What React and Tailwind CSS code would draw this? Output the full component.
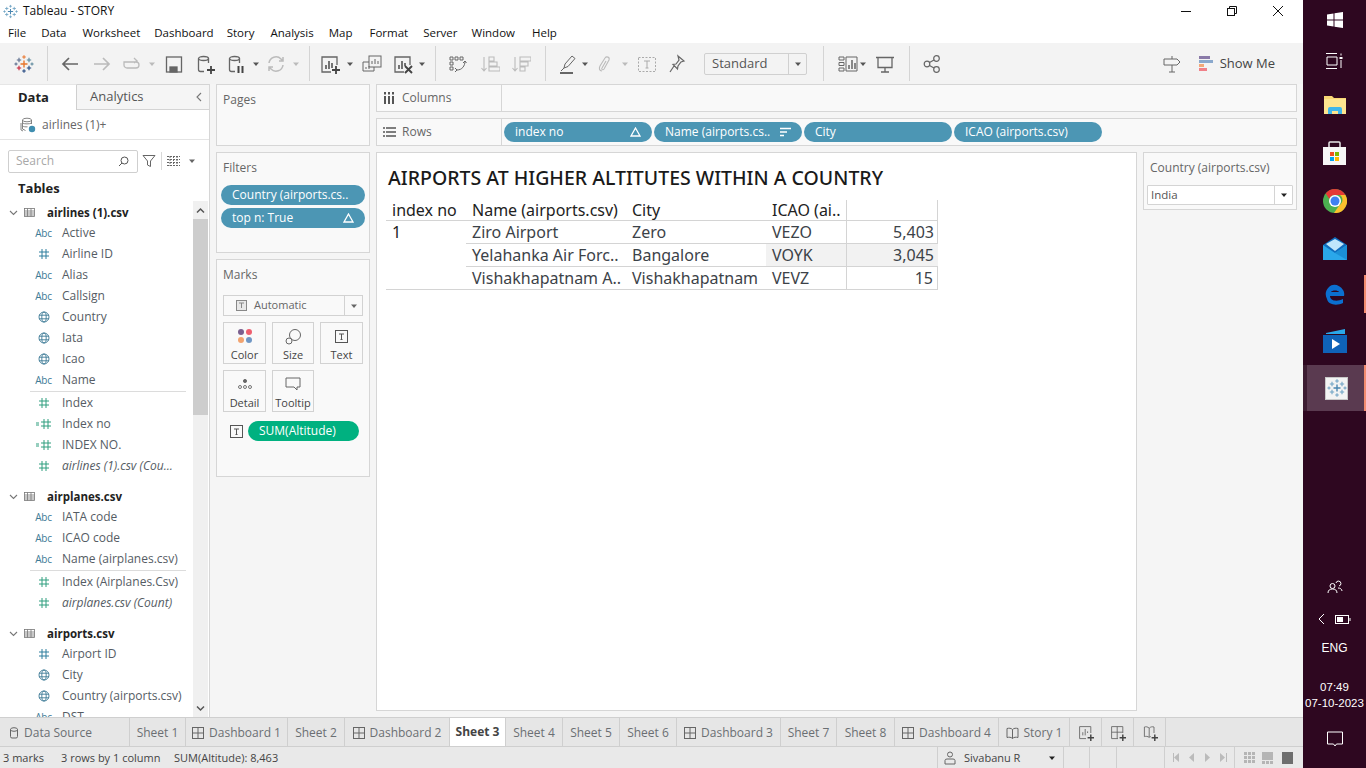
import React from 'react';

const S = ({ children, w = 20, h = 20, vb = '0 0 20 20', stroke = '#666', sw = 1.3, cls = '' }) => (
  <svg width={w} height={h} viewBox={vb} fill="none" stroke={stroke} strokeWidth={sw} className={`shrink-0 ${cls}`}>{children}</svg>
);
const Caret = ({ c = '#777' }) => (
  <svg width="8" height="8" viewBox="0 0 8 8" className="shrink-0"><path d="M1 2.500h6L4 6z" fill={c} /></svg>
);
const Sep = () => <div className="w-px h-[35px] bg-[#d4d4d4] shrink-0" />;

const TableauLogo = ({ size = 20, mono }) => {
  const c = mono
    ? ['#6fa3c4', '#6fa3c4', '#6fa3c4', '#6fa3c4', '#6fa3c4']
    : ['#e8762d', '#5a6b8c', '#c72035', '#1f447e', '#59879b'];
  const P = ({ x, y, r, col }) => <path d={`M${x - r} ${y}h${2 * r}M${x} ${y - r}v${2 * r}`} stroke={col} strokeWidth={r > 2.5 ? 1.4 : 1.1} />;
  return (
    <svg width={size} height={size} viewBox="0 0 20 20" fill="none" className="shrink-0">
      <P x={10} y={10} r={3.5} col={mono ? '#4a86b0' : '#e8762d'} />
      <P x={5} y={6} r={2.2} col={c[1]} /><P x={15} y={6} r={2.2} col={c[4]} />
      <P x={5} y={14} r={2.2} col={c[2]} /><P x={15} y={14} r={2.2} col={c[3]} />
      <P x={10} y={3} r={1.8} col={c[0]} /><P x={10} y={17} r={1.8} col={c[3]} />
      <P x={2} y={10} r={1.6} col={c[1]} /><P x={18} y={10} r={1.6} col={c[4]} />
    </svg>
  );
};

const Abc = () => <span className="text-[10px] leading-none text-[#3d7a96] tracking-[-0.3px]">Abc</span>;
const Hash = ({ c = '#2f7f9e' }) => (
  <S w={12} h={12} vb="0 0 12 12" stroke={c} sw={1}><path d="M1 4h10M1 8h10M4 1v10M8 1v10" /></S>
);
const CalcHash = () => (
  <div className="flex items-center">
    <svg width="4" height="12" viewBox="0 0 4 12" stroke="#2f9e7f" strokeWidth="1"><path d="M0 5h3M0 7h3" /></svg>
    <Hash c="#2f9e7f" />
  </div>
);
const Globe = () => (
  <S w={12} h={12} vb="0 0 12 12" stroke="#3d7a96" sw={0.9}>
    <circle cx="6" cy="6" r="5" /><ellipse cx="6" cy="6" rx="2.2" ry="5" /><path d="M1 4.2h10M1 7.8h10" />
  </S>
);
const Field = ({ icon, label, italic }) => {
  const map = { a: <Abc />, h: <Hash />, m: <Hash c="#2f9e7f" />, c: <CalcHash />, g: <Globe /> };
  return (
    <div className="h-[21px] flex items-center pl-[33px] shrink-0">
      <div className="w-[21px] flex justify-center items-center shrink-0 mr-[8px]">{map[icon]}</div>
      <span className={`text-[12px] whitespace-nowrap text-[#555c64] ${italic ? 'italic' : ''}`}>{label}</span>
    </div>
  );
};
const TableHead = ({ label }) => (
  <div className="h-[21px] flex items-center pl-[9px] shrink-0 pt-[2px]">
    <svg width="9" height="9" viewBox="0 0 9 9" fill="none" stroke="#777" strokeWidth="1.1"><path d="M1 3l3.500 3.500L8 3" /></svg>
    <svg width="11" height="11" viewBox="0 0 11 11" fill="none" stroke="#777" strokeWidth="0.8" className="ml-[6px]"><rect x="0.500" y="1.500" width="10" height="8" /><path d="M0.500 4h10M0.500 6h10M0.500 8h10M3.500 1.500v8M7 1.500v8" /></svg>
    <span className="ml-[12px] text-[11.500px] font-bold text-[#222] whitespace-nowrap">{label}</span>
  </div>
);
const Divider = () => <div className="h-px bg-[#dcdcdc] ml-[30px] mr-[7px] mt-[1px] shrink-0" />;

const Pill = ({ label, w, right, green }) => (
  <div className={`h-5 rounded-[10px] flex items-center pl-[11px] pr-[11px] shrink-0 justify-between text-[12px] text-white whitespace-nowrap overflow-hidden ${green ? 'bg-[#00b180]' : 'bg-[#4c96b4]'} ${w}`}>
    <span>{label}</span>{right}
  </div>
);
const Delta = () => (
  <svg width="11" height="10" viewBox="0 0 11 10" fill="none" stroke="#fff" strokeWidth="1.3"><path d="M5.500 1L10 9H1z" /></svg>
);
const SortIc = () => (
  <svg width="11" height="10" viewBox="0 0 11 10" stroke="#fff" strokeWidth="1.600"><path d="M0 1.500h11M0 5h7M0 8.500h4" /></svg>
);
const Panel = ({ cls, children }) => <div className={`border border-[#d6d6d6] bg-[#f9f9f9] ${cls}`}>{children}</div>;

const MarkBtn = ({ icon, label }) => (
  <div className="h-[42px] border border-[#d2d2d2] flex flex-col items-center justify-start pt-[3px] bg-[#f9f9f9]">
    <div className="h-[20px] flex items-center justify-center">{icon}</div>
    <span className="text-[11px] leading-[15px] text-[#444] mt-[1px] whitespace-nowrap">{label}</span>
  </div>
);
const TIcon = ({ s = 13 }) => (
  <svg width={s} height={s} viewBox="0 0 13 13" fill="none" stroke="#555"><rect x="0.500" y="0.500" width="12" height="12" /><path d="M4 4h5M6.500 4v5.500M5.500 9.500h2" /></svg>
);

const Tab = ({ w, label, icon, active, left }) => (
  <div className={`${w} h-full shrink-0 border-r border-[#cfcfcf] flex items-center gap-[5px] text-[12px] whitespace-nowrap ${left ? 'justify-start pl-[10px] gap-[6px]' : 'justify-center'} ${active ? 'bg-white font-bold text-[#444] pb-[1px]' : 'text-[#6b6f73] pt-[1px]'}`}>
    {icon}{label}
  </div>
);
const DashIc = () => <S w={12} h={12} vb="0 0 12 12" stroke="#666" sw={1}><rect x="0.500" y="0.500" width="11" height="11" /><path d="M6 .5v11M.5 6h11" /></S>;
const StoryIc = () => <S w={13} h={12} vb="0 0 13 12" stroke="#666" sw={1}><path d="M6.500 2.500C5 1 3 1 1 1.500v9c2-.5 4-.5 5.500 1 1.500-1.500 3.500-1.500 5.500-1v-9c-2-.5-4-.5-5.500 1zM6.500 2.500v9" /></S>;
const PlusBadge = () => <path d="M12 16h8M16 12v8" stroke="#444" strokeWidth="1.800" />;

const Th = ({ w, children }) => (
  <div className={`${w} h-[20px] shrink-0 flex items-center pl-[6px] whitespace-nowrap overflow-hidden text-[#222]`}>{children}</div>
);
const Td = ({ w, children, right, shade, border }) => (
  <div className={`${w} h-full shrink-0 flex items-center whitespace-nowrap overflow-hidden text-[#3c4248] ${right ? 'justify-end pr-[4px]' : 'pl-[6px]'} ${shade ? 'bg-[#f2f2f2]' : ''} ${border ? 'border-l border-[#d4d4d4]' : ''}`}>{children}</div>
);
const Row = ({ name, city, code, val, shade }) => (
  <div className="h-[23px] flex border-b border-[#d4d4d4]">
    <Td w="w-[160px]">{name}</Td>
    <Td w="w-[140px]">{city}</Td>
    <Td w="w-[80px]" shade={shade}>{code}</Td>
    <Td w="w-[92px]" right shade={shade} border>{val}</Td>
  </div>
);

const TaskCell = ({ h, children, cls = '' }) => <div className={`${h} w-full flex items-center justify-center shrink-0 ${cls}`}>{children}</div>;

export default function App() {
  return (
    <div className="w-[1366px] h-[768px] flex overflow-hidden bg-white font-['Open_Sans','Noto_Sans',sans-serif] text-[12px]">
      <div className="w-[1303px] h-full flex flex-col shrink-0">
        {/* title */}
        <div className="h-[22px] flex items-center bg-white shrink-0 pl-[3px] relative">
          <TableauLogo size={15} mono />
          <span className="ml-[5px] text-[12px] text-[#111]">Tableau - STORY</span>
          <div className="ml-auto flex items-center h-full pr-[19px]">
            <S w={12} h={12} vb="0 0 12 12" stroke="#111" sw={1} cls="mr-[34px]"><path d="M1 6.500h10" /></S>
            <S w={12} h={12} vb="0 0 12 12" stroke="#111" sw={1} cls="mr-[34px]"><rect x="1.500" y="3.500" width="7" height="7" /><path d="M3.500 3.500v-2h7v7h-2" /></S>
            <S w={12} h={12} vb="0 0 12 12" stroke="#111" sw={1}><path d="M1 1l10 10M11 1L1 11" /></S>
          </div>
        </div>
        {/* menu */}
        <div className="h-[21px] flex items-center bg-white shrink-0 text-[11.500px] text-[#111] pl-[8px]">
          <span>File</span><span className="ml-[15px]">Data</span><span className="ml-[16px]">Worksheet</span><span className="ml-[14px]">Dashboard</span><span className="ml-[13px]">Story</span><span className="ml-[16px]">Analysis</span><span className="ml-[15px]">Map</span><span className="ml-[17px]">Format</span><span className="ml-[15px]">Server</span><span className="ml-[14px]">Window</span><span className="ml-[17px]">Help</span>
        </div>
        {/* toolbar */}
        <div className="h-[41px] bg-[#f3f3f3] flex items-center shrink-0 pr-[28px]">
          <div className="ml-[14px]"><TableauLogo /></div>
          <div className="ml-[13px]"><Sep /></div>
          <div className="ml-[12px]"><S stroke="#666" sw={1.7}><path d="M18 10H3M9 4l-6 6 6 6" /></S></div>
          <div className="ml-[12px]"><S stroke="#bbb" sw={1.7}><path d="M2 10h15M11 4l6 6-6 6" /></S></div>
          <div className="ml-[10px]"><S stroke="#bbb"><path d="M2 8h12a3 3 0 0 1 3 3 3 3 0 0 1-3 3H5a3 3 0 0 1-3-3zM12 4l3 3-3 2" /></S></div>
          <div className="ml-[6px]"><Caret c="#bbb" /></div>
          <div className="ml-[8px]"><S><rect x="2.500" y="3" width="15" height="15" /><rect x="6" y="13" width="7" height="5" fill="#666" /></S></div>
          <div className="ml-[11px]"><S><ellipse cx="8.500" cy="4.500" rx="5" ry="2" /><path d="M3.500 4.500v11a2 2 0 0 0 2 2H9M13.500 4.500V9" /><PlusBadge /></S></div>
          <div className="ml-[11px]"><S><ellipse cx="8.500" cy="4.500" rx="5" ry="2" /><path d="M3.500 4.500v11a2 2 0 0 0 2 2H9M13.500 4.500V9" /><path d="M12.500 12v7M16.500 12v7" stroke="#444" strokeWidth="2" /></S></div>
          <div className="ml-[6px]"><Caret c="#555" /></div>
          <div className="ml-[6px]"><S stroke="#bbb" sw={1.5}><path d="M3 9a7 7 0 0 1 12-4l2 2M17 11a7 7 0 0 1-12 4l-2-2M17 3v4h-4M3 17v-4h4" /></S></div>
          <div className="ml-[6px]"><Caret c="#bbb" /></div>
          <div className="ml-[9px]"><Sep /></div>
          <div className="ml-[10px]"><S><path d="M11 18H2V3h15v8" /><path d="M6 15v-4M9 15V7M12 14v-5" strokeWidth="1.800" /><PlusBadge /></S></div>
          <div className="ml-[6px]"><Caret c="#555" /></div>
          <div className="ml-[8px]"><S sw={1}><rect x="7" y="2" width="12" height="11" fill="#f3f3f3" /><path d="M10 10V7M13 10V5M16 10V7" /><path d="M7 8H1v9h11v-4" /><path d="M4 15v-2M7 15v-3" /></S></div>
          <div className="ml-[11px]"><S><path d="M11 18H2V3h15v8" /><path d="M6 15v-4M9 15V7M12 12V9" strokeWidth="1.800" /><path d="M12 12l7 7M19 12l-7 7" stroke="#444" strokeWidth="1.900" /></S></div>
          <div className="ml-[5px]"><Caret c="#555" /></div>
          <div className="ml-[9px]"><Sep /></div>
          <div className="ml-[11px]"><S sw={1}><path d="M3 3h3v3H3zM8 3h3v3H8zM13 3h3v3h-3zM3 8h3v3H3zM3 13h3v3H3z" /><path d="M18 7c0 5-3 9-8 9M8 14l2 2-2 2M16 9l2-2 1.500 2" /></S></div>
          <div className="ml-[13px]"><S stroke="#bbb" sw={1.1}><path d="M4 3v14M1.500 14L4 17l2.500-3M9 3h5v4H9zM9 8h8v4H9zM9 13h11v4H9z" /></S></div>
          <div className="ml-[11px]"><S stroke="#bbb" sw={1.1}><path d="M4 3v14M1.500 14L4 17l2.500-3M9 3h11v4H9zM9 8h8v4H9zM9 13h5v4H9z" /></S></div>
          <div className="ml-[14px]"><Sep /></div>
          <div className="ml-[12px]"><S sw={1}><path d="M6 14l1-4 7-8 3 2.500-7 8zM3 17l3-3" /><path d="M2 19h13" strokeWidth="2" /></S></div>
          <div className="ml-[3px]"><Caret c="#555" /></div>
          <div className="ml-[6px]"><S stroke="#bbb" sw={1.1}><path d="M7 17c-3 0-3-3-2-5l5-8c1.500-2 5-1 4 2l-5 9c-1 1.500-3 .5-2-1l4-7" /></S></div>
          <div className="ml-[6px]"><Caret c="#bbb" /></div>
          <div className="ml-[8px]"><S stroke="#aaa" sw={1}><rect x="1.500" y="3.500" width="17" height="14" strokeDasharray="2 1.500" /><path d="M7 7h6M10 7v7M8.500 14h3" /></S></div>
          <div className="ml-[10px]"><S sw={1.2}><path d="M11 2l6 5-3 1-3 4-.5 3L6 10.500l3-.5 3-4zM7 12l-4 6" /></S></div>
          <div className="ml-[17px] w-[103px] h-[22px] border border-[#d0d0d0] rounded-[2px] flex items-center shrink-0">
            <span className="flex-1 pl-[7px] text-[13px] text-[#555]">Standard</span>
            <div className="w-[18px] h-full border-l border-[#d0d0d0] flex items-center justify-center"><Caret c="#555" /></div>
          </div>
          <div className="ml-[16px]"><Sep /></div>
          <div className="ml-[14px]"><S sw={1}><path d="M1 3h5v3H1zM1 8.500h5v3H1zM1 14h5v3H1zM8 3h11v14H8z" /><path d="M11 15v-4M14 15V6M17 15v-6" strokeWidth="1.500" /></S></div>
          <div className="ml-[1px]"><Caret c="#555" /></div>
          <div className="ml-[8px]"><S><path d="M1 3.500h18M3 3.500v10h14v-10M10 13.500V18M6 18h8" /></S></div>
          <div className="ml-[14px]"><Sep /></div>
          <div className="ml-[12px]"><S sw={1.2}><circle cx="5" cy="10" r="2.800" /><circle cx="14.500" cy="4.500" r="2.800" /><circle cx="14.500" cy="15.500" r="2.800" /><path d="M7.500 8.500l4.500-2.500M7.500 11.500l4.500 2.500" /></S></div>
          <div className="ml-auto"><S sw={1}><path d="M2 5h13l3 3-3 3H2zM10 2v3M10 11v7M7 18h6" /></S></div>
          <div className="ml-[17px] flex flex-col gap-[1px] w-[15px] shrink-0">
            <div className="h-[3px] w-[11px] bg-[#8a7aa8]" /><div className="h-[3px] w-[14px] bg-[#8aa8cc]" /><div className="h-[3px] w-[5px] bg-[#f2a878]" /><div className="h-[3px] w-[8px] bg-[#f08088]" />
          </div>
          <span className="ml-[6px] text-[13px] text-[#444]">Show Me</span>
        </div>
        {/* content */}
        <div className="flex-1 min-h-0 flex bg-[#f5f5f5]">
          {/* left data pane */}
          <div className="w-[210px] shrink-0 flex flex-col bg-white border-r border-[#d6d6d6] overflow-hidden">
            <div className="h-[26px] flex shrink-0 bg-[#f5f5f5]">
              <div className="w-[77px] bg-white flex items-center pl-[18px] font-bold text-[13px] text-[#222] border-t border-[#e6e6e6] border-r border-r-[#cfcfcf]">Data</div>
              <div className="flex-1 flex items-center pl-[13px] text-[13px] text-[#555] border-b border-t border-[#d4d4d4]">Analytics
                <svg width="8" height="10" viewBox="0 0 8 10" fill="none" stroke="#777" strokeWidth="1.1" className="ml-auto mr-[6px]"><path d="M6 1L2 5l4 4" /></svg>
              </div>
            </div>
            <div className="h-[30px] flex items-center pl-[20px] border-b border-[#e4e4e4] shrink-0">
              <svg width="16" height="16" viewBox="0 0 16 16" fill="none" stroke="#777" strokeWidth="0.9"><ellipse cx="7" cy="3" rx="4.500" ry="1.800" /><path d="M2.500 3v9l3 1.500M11.500 3v4M1 6v7l2 1M2.500 6c2 1.200 7 1.200 9 0M2.500 9c1 .7 3 1 5 .8" /><circle cx="12" cy="12" r="3.200" fill="#3f8eb0" stroke="none" /></svg>
              <span className="ml-[6px] text-[12px] text-[#666]">airlines (1)+</span>
            </div>
            <div className="h-[38px] flex items-center pl-[8px] shrink-0 pt-[4px]">
              <div className="w-[130px] h-[23px] border border-[#cfcfcf] rounded-[2px] flex items-center px-[7px] text-[#a8a8a8] text-[12px]">
                Search
                <svg width="13" height="13" viewBox="0 0 13 13" fill="none" stroke="#555" strokeWidth="1" className="ml-auto"><circle cx="7.500" cy="5.500" r="3.500" /><path d="M5 8l-3 3" /></svg>
              </div>
              <svg width="14" height="14" viewBox="0 0 14 14" fill="none" stroke="#666" strokeWidth="1" className="ml-[4px]"><path d="M1 1.500h12L8.500 7v5.500l-3-1.500V7z" /></svg>
              <div className="w-px h-[18px] bg-[#d8d8d8] ml-[5px]" />
              <svg width="13" height="10" viewBox="0 0 13 10" stroke="#666" strokeWidth="1" className="ml-[5px]"><path d="M0 .5h13M0 3.500h13M0 6.500h13M0 9.500h13M3 0v10M6.500 0v10M10 0v10" strokeDasharray="2 1" /></svg>
              <span className="ml-[8px]"><Caret c="#666" /></span>
            </div>
            <div className="h-[18px] flex items-center pl-[18px] font-bold text-[13px] text-[#222] shrink-0 mt-[2px] mb-[3px]">Tables</div>
            <div className="flex-1 min-h-0 flex overflow-hidden">
              <div className="flex-1 min-w-0 overflow-hidden flex flex-col">
                <TableHead label="airlines (1).csv" />
                <Field icon="a" label="Active" />
                <Field icon="h" label="Airline ID" />
                <Field icon="a" label="Alias" />
                <Field icon="a" label="Callsign" />
                <Field icon="g" label="Country" />
                <Field icon="g" label="Iata" />
                <Field icon="g" label="Icao" />
                <Field icon="a" label="Name" />
                <Divider />
                <Field icon="m" label="Index" />
                <Field icon="c" label="Index no" />
                <Field icon="c" label="INDEX NO." />
                <Field icon="m" label="airlines (1).csv (Cou..." italic />
                <div className="h-[9px] shrink-0" />
                <TableHead label="airplanes.csv" />
                <Field icon="a" label="IATA code" />
                <Field icon="a" label="ICAO code" />
                <Field icon="a" label="Name (airplanes.csv)" />
                <Divider />
                <Field icon="m" label="Index (Airplanes.Csv)" />
                <Field icon="m" label="airplanes.csv (Count)" italic />
                <div className="h-[9px] shrink-0" />
                <TableHead label="airports.csv" />
                <Field icon="h" label="Airport ID" />
                <Field icon="g" label="City" />
                <Field icon="g" label="Country (airports.csv)" />
                <Field icon="a" label="DST" />
              </div>
              <div className="w-[15px] mr-px shrink-0 bg-[#f0f0f0] flex flex-col">
                <div className="h-[18px] flex items-center justify-center shrink-0"><svg width="9" height="7" viewBox="0 0 9 7" fill="none" stroke="#555" strokeWidth="1.500"><path d="M1 5.500l3.500-3.500L8 5.500" /></svg></div>
                <div className="h-[196px] bg-[#cdcdcd] shrink-0" />
                <div className="flex-1" />
                <div className="h-[17px] flex items-center justify-center shrink-0"><svg width="9" height="7" viewBox="0 0 9 7" fill="none" stroke="#555" strokeWidth="1.500"><path d="M1 1.500L4.500 5 8 1.500" /></svg></div>
              </div>
            </div>
          </div>
          {/* pages/filters/marks */}
          <div className="w-[154px] ml-[6px] shrink-0 flex flex-col">
            <Panel cls="h-[62px] pl-[6px] pt-[6px] text-[12px] leading-[17px] text-[#666] shrink-0">Pages</Panel>
            <Panel cls="h-[101px] mt-[6px] shrink-0 px-[4px] pt-[6px]">
              <div className="pl-[2px] text-[12px] text-[#666] h-[17px] leading-[17px]">Filters</div>
              <div className="mt-[9px] flex flex-col gap-[3px]">
                <Pill label="Country (airports.cs.." w="w-[144px]" />
                <Pill label="top n: True" w="w-[144px]" right={<Delta />} />
              </div>
            </Panel>
            <Panel cls="h-[218px] mt-[6px] shrink-0 px-[6px] pt-[6px]">
              <div className="text-[12px] text-[#666] h-[17px] leading-[17px]">Marks</div>
              <div className="mt-[12px] w-[140px] h-[21px] border border-[#d2d2d2] flex items-center bg-[#f9f9f9]">
                <div className="flex-1 flex items-center pl-[12px] text-[11px] text-[#666] gap-[7px]">
                  <svg width="11" height="11" viewBox="0 0 11 11" fill="#e8e8e8" stroke="#888"><rect x="0.500" y="0.500" width="10" height="10" /><path d="M3 3h5M5.500 3v5" fill="none" /></svg>
                  Automatic
                </div>
                <div className="w-[18px] h-full border-l border-[#d2d2d2] flex items-center justify-center"><Caret c="#666" /></div>
              </div>
              <div className="mt-[6px] grid grid-cols-[43px_42px_43px] gap-x-[6px] gap-y-[6px]">
                <MarkBtn label="Color" icon={<svg width="16" height="16" viewBox="0 0 16 16"><circle cx="4" cy="4" r="3" fill="#7a5f8f" /><circle cx="12" cy="4" r="3" fill="#ee5f6f" /><circle cx="4" cy="12" r="3" fill="#f2a36f" /><circle cx="12" cy="12" r="3" fill="#6f96c4" /></svg>} />
                <MarkBtn label="Size" icon={<svg width="17" height="17" viewBox="0 0 17 17" fill="none" stroke="#666" strokeWidth="1"><circle cx="10" cy="7" r="5.500" /><circle cx="4" cy="13" r="3" fill="#f9f9f9" /></svg>} />
                <MarkBtn label="Text" icon={<TIcon />} />
                <MarkBtn label="Detail" icon={<svg width="16" height="14" viewBox="0 0 16 14" fill="none" stroke="#666" strokeWidth="0.9"><circle cx="8" cy="4" r="1.600" fill="#666" /><circle cx="3" cy="10" r="1.500" /><circle cx="8" cy="10" r="1.500" /><circle cx="13" cy="10" r="1.500" /></svg>} />
                <MarkBtn label="Tooltip" icon={<svg width="16" height="14" viewBox="0 0 16 14" fill="none" stroke="#666"><path d="M1 1h14v9h-3v3l-3-3H1z" /></svg>} />
              </div>
              <div className="mt-[9px] flex items-center pl-[7px] gap-[5px]">
                <TIcon />
                <Pill label="SUM(Altitude)" w="w-[111px]" green />
              </div>
            </Panel>
          </div>
          {/* right */}
          <div className="flex-1 min-w-0 ml-[6px] mr-[6px] flex flex-col">
            <Panel cls="h-[28px] flex items-center shrink-0">
              <div className="w-[125px] h-full border-r border-[#d6d6d6] flex items-center pl-[6px] gap-[7px] text-[12px] text-[#666] shrink-0">
                <svg width="12" height="12" viewBox="0 0 12 12" stroke="#555" strokeWidth="2"><path d="M2 4v8M6 4v8M10 4v8M2 0v2.500M6 0v2.500M10 0v2.500" /></svg>Columns
              </div>
            </Panel>
            <Panel cls="h-[28px] mt-[6px] flex items-center shrink-0">
              <div className="w-[125px] h-full border-r border-[#d6d6d6] flex items-center pl-[6px] gap-[6px] text-[12px] text-[#666] shrink-0">
                <svg width="13" height="12" viewBox="0 0 13 12" stroke="#555" strokeWidth="1.600"><path d="M0 2h2M3 2h10M0 6h2M3 6h10M0 10h2M3 10h10" /></svg>Rows
              </div>
              <div className="flex gap-[2px] ml-[2px]">
                <Pill label="index no" w="w-[148px]" right={<Delta />} />
                <Pill label="Name (airports.cs.." w="w-[148px]" right={<SortIc />} />
                <Pill label="City" w="w-[148px]" />
                <Pill label="ICAO (airports.csv)" w="w-[148px]" />
              </div>
            </Panel>
            <div className="flex-1 min-h-0 flex mt-[6px] mb-[6px] gap-[6px]">
              {/* view */}
              <div className="w-[761px] shrink-0 border border-[#d6d6d6] bg-white pl-[9px] pt-[11px] text-[16px] font-['Noto_Sans','Open_Sans',sans-serif]">
                <div className="text-[19.500px] font-medium leading-[27px] text-[#1a1a1a] pl-[2px] whitespace-nowrap">AIRPORTS AT HIGHER ALTITUTES WITHIN A COUNTRY</div>
                <div className="w-[552px] mt-[9px]">
                  <div className="flex h-[21px] border-b border-[#d4d4d4]">
                    <Th w="w-[80px]">index no</Th>
                    <Th w="w-[160px]">Name (airports.csv)</Th>
                    <Th w="w-[140px]">City</Th>
                    <Th w="w-[80px]">ICAO (ai..</Th>
                    <div className="w-[92px] border-l border-r border-[#d4d4d4] shrink-0" />
                  </div>
                  <div className="flex border-b border-r border-[#d4d4d4]">
                    <div className="w-[80px] shrink-0 pl-[6px] h-[22px] flex items-center text-[#222]">1</div>
                    <div className="flex-1 min-w-0">
                      <Row name="Ziro Airport" city="Zero" code="VEZO" val="5,403" />
                      <Row name="Yelahanka Air Forc.." city="Bangalore" code="VOYK" val="3,045" shade />
                      <div className="h-[22px] flex">
                        <Td w="w-[160px]">Vishakhapatnam A..</Td>
                        <Td w="w-[140px]">Vishakhapatnam</Td>
                        <Td w="w-[80px]">VEVZ</Td>
                        <Td w="w-[91px]" right border>15</Td>
                      </div>
                    </div>
                  </div>
                </div>
              </div>
              {/* country filter */}
              <div className="w-[154px] h-[58px] shrink-0 border border-[#d6d6d6] bg-[#f9f9f9] flex flex-col">
                <div className="h-[32px] pb-[2px] flex items-center pl-[6px] text-[12px] text-[#666] whitespace-nowrap">Country (airports.csv)</div>
                <div className="mx-[3px] h-[20px] border border-[#d4d4d4] bg-white flex items-center rounded-[1px]">
                  <span className="flex-1 pl-[3px] text-[11.500px] text-[#555]">India</span>
                  <div className="w-[18px] h-full border-l border-[#d4d4d4] flex items-center justify-center"><Caret c="#222" /></div>
                </div>
              </div>
            </div>
          </div>
        </div>
        {/* tabs */}
        <div className="h-[30px] bg-[#e6e6e6] border-t border-b border-[#cfcfcf] flex items-stretch shrink-0 relative z-10">
          <Tab w="w-[130px]" left label="Data Source" icon={<svg width="8" height="12" viewBox="0 0 8 12" fill="none" stroke="#666"><ellipse cx="4" cy="2.500" rx="3.500" ry="1.800" /><path d="M.5 2.500v7a1.500 1.500 0 0 0 1.500 1.500h4a1.500 1.500 0 0 0 1.500-1.500v-7" /></svg>} />
          <Tab w="w-[56px]" label="Sheet 1" />
          <Tab w="w-[102px]" label="Dashboard 1" icon={<DashIc />} />
          <Tab w="w-[57px]" label="Sheet 2" />
          <Tab w="w-[105px]" label="Dashboard 2" icon={<DashIc />} />
          <Tab w="w-[56px]" label="Sheet 3" active />
          <Tab w="w-[57px]" label="Sheet 4" />
          <Tab w="w-[57px]" label="Sheet 5" />
          <Tab w="w-[57px]" label="Sheet 6" />
          <Tab w="w-[104px]" label="Dashboard 3" icon={<DashIc />} />
          <Tab w="w-[56px]" label="Sheet 7" />
          <Tab w="w-[58px]" label="Sheet 8" />
          <Tab w="w-[104px]" label="Dashboard 4" icon={<DashIc />} />
          <Tab w="w-[71px]" label="Story 1" icon={<StoryIc />} />
          <Tab w="w-[32px]" icon={<S w={16} h={16} vb="0 0 20 20" sw={1.1}><path d="M10 17H2V2h14v8" /><path d="M6 13V9M9 13V5M12 10V8" /><PlusBadge /></S>} />
          <Tab w="w-[32px]" icon={<S w={16} h={16} vb="0 0 20 20" sw={1.1}><path d="M10 17H2V2h14v8M9 2v15M2 9h14" /><PlusBadge /></S>} />
          <Tab w="w-[32px]" icon={<S w={16} h={16} vb="0 0 20 20" sw={1.1}><path d="M9 4C7 2 5 2 3 2.500v12c2-.5 4-.5 6 1 1-.7 1-1 2-1M9 4c2-2 4-2 6-1.500V10M9 4v11" /><PlusBadge /></S>} />
        </div>
        {/* status */}
        <div className="h-[21px] bg-[#e9e9e9] flex items-center shrink-0 text-[11px] text-[#444] whitespace-nowrap">
          <span className="ml-[3px] w-[58px] pt-[1px]">3 marks</span>
          <span className="w-[113px] pt-[1px]">3 rows by 1 column</span>
          <span className="pt-[1px]">SUM(Altitude): 8,463</span>
          <div className="ml-auto flex h-full items-stretch">
            <div className="w-[127px] border-l border-r border-[#cfcfcf] flex items-center pl-[6px]">
              <svg width="12" height="14" viewBox="0 0 12 14" fill="none" stroke="#666"><circle cx="6" cy="3.500" r="2.500" /><path d="M1 13V9.500Q1 8 3 8h6q2 0 2 1.500V13z" /></svg>
              <span className="ml-[8px] pt-[1px]">Sivabanu R</span>
              <span className="ml-auto mr-[7px]"><Caret c="#222" /></span>
            </div>
            <div className="w-[26px] border-r border-[#cfcfcf]" />
            <div className="w-[27px] border-r border-[#cfcfcf]" />
            <div className="w-[48px] border-r border-[#cfcfcf]" />
            <div className="w-[70px] border-r border-[#cfcfcf] flex items-center justify-center gap-[9px]">
              <svg width="7" height="9" viewBox="0 0 7 9" fill="#bbb"><path d="M1 0v9h1V0zM7 0v9L2 4.500z" /></svg>
              <svg width="7" height="9" viewBox="0 0 7 9" fill="#bbb"><path d="M6 0v9L1 4.500z" /></svg>
              <svg width="7" height="9" viewBox="0 0 7 9" fill="#bbb"><path d="M1 0v9l5-4.500z" /></svg>
              <svg width="7" height="9" viewBox="0 0 7 9" fill="#bbb"><path d="M6 0v9h1V0zM0 0v9l5-4.500z" /></svg>
            </div>
            <div className="w-[68px] flex items-center justify-center gap-[7px] pr-[2px]">
              <svg width="11" height="12" viewBox="0 0 11 12" fill="#b5b5b5"><path d="M0 0h3v3H0zM4 0h3v3H4zM8 0h3v3H8zM0 4h3v3H0zM4 4h3v3H4zM8 4h3v3H8zM0 8h3v3H0zM4 8h3v3H4zM8 8h3v3H8z" /></svg>
              <svg width="11" height="12" viewBox="0 0 11 12" fill="#b5b5b5"><path d="M0 0h11v8H0zM0 9h3v3H0zM4 9h3v3H4zM8 9h3v3H8z" /></svg>
              <div className="w-[11px] h-[12px] bg-[#6e6e6e] ml-[2px]" />
            </div>
          </div>
        </div>
      </div>
      {/* taskbar */}
      <div className="w-[63px] h-full bg-[#2e0720] flex flex-col shrink-0 relative text-white">
        <TaskCell h="h-[40px]"><svg width="16" height="16" viewBox="0 0 16 16" fill="#fff"><path d="M0 2.500l6.500-1v6H0zM7.500 1.300L16 0v7.500H7.500zM0 8.500h6.500v6l-6.500-1zM7.500 8.500H16V16l-8.500-1.300z" /></svg></TaskCell>
        <TaskCell h="h-[41px]"><svg width="17" height="16" viewBox="0 0 17 16" fill="none" stroke="#fff"><path d="M0 .5h11M0 15.500h11M1 4h10v8H1zM15 .5v2M15 7v8" /><rect x="13.500" y="4" width="3" height="2" fill="#fff" stroke="none" /></svg></TaskCell>
        <TaskCell h="h-[48px]"><svg width="22" height="18" viewBox="0 0 22 18"><path d="M0 0h8l2 2h12v16H0z" fill="#f8d775" /><path d="M0 3h22v15H0z" fill="#fde48f" /><path d="M4 18v-5a2 2 0 0 1 2-2h10a2 2 0 0 1 2 2v5h-4v-3H8v3z" fill="#3fb6ea" /></svg></TaskCell>
        <TaskCell h="h-[47px]"><svg width="23" height="24" viewBox="0 0 23 24"><path d="M0 6h23v18H0z" fill="#f6f6f6" /><path d="M6 6V2a1 1 0 0 1 1-1h9a1 1 0 0 1 1 1v4" fill="none" stroke="#e8e8e8" strokeWidth="1.500" /><path d="M7 11h4v4H7z" fill="#f25022" /><path d="M12 11h4v4h-4z" fill="#7fba00" /><path d="M7 16h4v4H7z" fill="#00a4ef" /><path d="M12 16h4v4h-4z" fill="#ffb900" /></svg></TaskCell>
        <TaskCell h="h-[49px]"><svg width="24" height="24" viewBox="0 0 24 24"><circle cx="12" cy="12" r="12" fill="#4caf50" /><path d="M12 0a12 12 0 0 1 10.400 6H12a6 6 0 0 0-5.700 4L2.700 4.400A12 12 0 0 1 12 0z" fill="#e53935" /><path d="M22.400 6A12 12 0 0 1 11 24l5.500-8a6 6 0 0 0 .5-10z" fill="#fbc02d" /><circle cx="12" cy="12" r="6" fill="#fff" /><circle cx="12" cy="12" r="4.500" fill="#3f80f0" /></svg></TaskCell>
        <TaskCell h="h-[47px]"><svg width="24" height="23" viewBox="0 0 24 23"><path d="M12 0l12 8v15H0V8z" fill="#0f6cbd" /><path d="M0 8l12 8 12-8v15H0z" fill="#2aa7ea" /><path d="M3 7l9-5 9 5-9 7z" fill="#bfe6fb" /><path d="M12 16l12-8v15z" fill="#1b8fd6" /></svg></TaskCell>
        <TaskCell h="h-[44px]"><svg width="21" height="21" viewBox="0 0 21 21" fill="none"><path d="M3 15c-2-4-2-8 2-12s11-2 14 3c2 3 1 6 1 6H6c0 5 7 6 13 3v4c-6 3-15 2-16-4z" fill="#0b6fd0" /><path d="M7 8c1-2 7-2 8 0z" fill="#2e0720" /></svg></TaskCell>
        <TaskCell h="h-[49px]"><svg width="24" height="24" viewBox="0 0 24 24"><path d="M3 4L22 0v5H3z" fill="#2aa7ea" /><path d="M0 6h24v18H0z" fill="#0f62b8" /><path d="M9 10l8 5-8 5z" fill="#fff" /></svg></TaskCell>
        <TaskCell h="h-[46px]" cls="bg-[#5a3a50] border-l-[4px] border-[#3c1c31]">
          <div className="w-[23px] h-[23px] bg-[#f3f3f3] border border-[#c8c8c8] flex items-center justify-center"><TableauLogo size={20} mono /></div>
        </TaskCell>
        <div className="absolute right-0 top-[275px] w-[2px] h-[38px] bg-[#f28b6f]" />
        <div className="absolute right-0 top-[365px] w-[2px] h-[46px] bg-[#f28b6f]" />
        <div className="flex-1" />
        <TaskCell h="h-[30px]"><svg width="16" height="16" viewBox="0 0 16 16" fill="none" stroke="#fff"><circle cx="5.500" cy="8" r="2.500" /><path d="M1 15c0-3 2-4 4.500-4S10 12 10 15M9 5a2.500 2.500 0 1 1 3 3M11 10c2 0 4 1 4 3" /></svg></TaskCell>
        <div className="h-[36px] flex items-center justify-center gap-[10px] shrink-0">
          <svg width="7" height="12" viewBox="0 0 7 12" fill="none" stroke="#fff"><path d="M6 1L1 6l5 5" /></svg>
          <svg width="16" height="9" viewBox="0 0 16 9" fill="none" stroke="#fff"><rect x="0.500" y="0.500" width="13" height="8" /><rect x="2" y="2" width="6" height="5" fill="#fff" stroke="none" /><path d="M15 3v3" /></svg>
        </div>
        <TaskCell h="h-[21px]"><span className="text-[12px] font-['Liberation_Sans',sans-serif]">ENG</span></TaskCell>
        <div className="h-[22px] shrink-0" />
        <div className="h-[30px] flex flex-col items-center justify-center shrink-0 text-[11.500px] leading-[16px] font-['Liberation_Sans',sans-serif]">
          <span>07:49</span><span>07-10-2023</span>
        </div>
        <TaskCell h="h-[58px]"><svg width="16" height="16" viewBox="0 0 16 16" fill="none" stroke="#fff"><path d="M.5 1h15v12H9.500L8 15l-1.500-2H.5z" /></svg></TaskCell>
      </div>
    </div>
  );
}
